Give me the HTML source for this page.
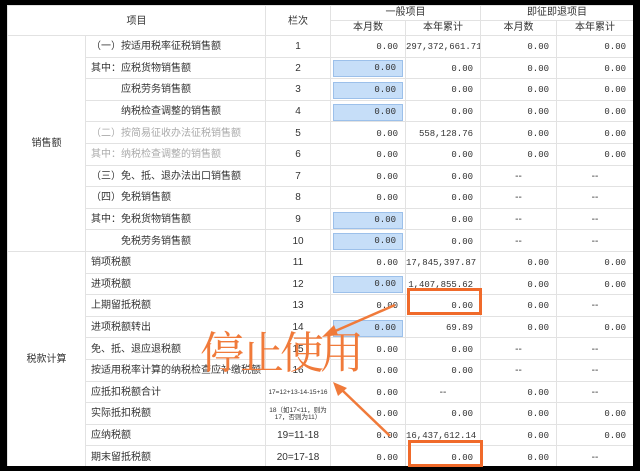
<!DOCTYPE html>
<html><head><meta charset="utf-8"><style>
body{margin:0;width:640px;height:471px;background:#000;overflow:hidden;position:relative;font-family:"Liberation Sans","Noto Sans CJK SC",sans-serif;}
#w{position:absolute;left:7px;top:5px;width:626px;height:461px;background:#fff;overflow:hidden;}
table{border-collapse:collapse;table-layout:fixed;width:626px;font-size:10px;color:#333;}
td{border:1px solid #e2e2e2;padding:2px 0 0 0;height:18.6px;line-height:14px;white-space:nowrap;overflow:hidden;vertical-align:middle;}
.c{text-align:center}
.r{text-align:right;padding-right:7px;font-family:"Liberation Mono","Noto Sans CJK SC",monospace;font-size:9px;}
.g{color:#aaa}
.in{display:block;margin:0 2px 0 2px;background:#c6def8;border:1px solid #9cc0ea;height:15px;line-height:15px;text-align:right;padding-right:6px;}
.in2{padding-right:0}
.h{height:14px;padding:0}
.sm{font-size:6.5px;line-height:7px;white-space:normal}
.l{padding-left:5px}
</style></head><body>
<div id="w">
<table>
<colgroup><col style="width:78px"><col style="width:180px"><col style="width:65px"><col style="width:75px"><col style="width:75px"><col style="width:76px"><col style="width:77px"></colgroup>
<tr><td class="c" rowspan="2" colspan="2">项目</td><td class="c" rowspan="2">栏次</td><td class="c h" colspan="2">一般项目</td><td class="c h" colspan="2">即征即退项目</td></tr>
<tr><td class="c h">本月数</td><td class="c h">本年累计</td><td class="c h">本月数</td><td class="c h">本年累计</td></tr>
<tr><td class="c" rowspan="10">销售额</td><td class="l">（一）按适用税率征税销售额</td><td class="c">1</td><td class="r">0.00</td><td class="r">297,372,661.71</td><td class="r">0.00</td><td class="r">0.00</td></tr>
<tr><td class="l">其中：应税货物销售额</td><td class="c">2</td><td class="r in2"><span class="in">0.00</span></td><td class="r">0.00</td><td class="r">0.00</td><td class="r">0.00</td></tr>
<tr><td class="l">　　　应税劳务销售额</td><td class="c">3</td><td class="r in2"><span class="in">0.00</span></td><td class="r">0.00</td><td class="r">0.00</td><td class="r">0.00</td></tr>
<tr><td class="l">　　　纳税检查调整的销售额</td><td class="c">4</td><td class="r in2"><span class="in">0.00</span></td><td class="r">0.00</td><td class="r">0.00</td><td class="r">0.00</td></tr>
<tr><td class="l g">（二）按简易征收办法征税销售额</td><td class="c">5</td><td class="r">0.00</td><td class="r">558,128.76</td><td class="r">0.00</td><td class="r">0.00</td></tr>
<tr><td class="l g">其中：纳税检查调整的销售额</td><td class="c">6</td><td class="r">0.00</td><td class="r">0.00</td><td class="r">0.00</td><td class="r">0.00</td></tr>
<tr><td class="l">（三）免、抵、退办法出口销售额</td><td class="c">7</td><td class="r">0.00</td><td class="r">0.00</td><td class="c">--</td><td class="c">--</td></tr>
<tr><td class="l">（四）免税销售额</td><td class="c">8</td><td class="r">0.00</td><td class="r">0.00</td><td class="c">--</td><td class="c">--</td></tr>
<tr><td class="l">其中：免税货物销售额</td><td class="c">9</td><td class="r in2"><span class="in">0.00</span></td><td class="r">0.00</td><td class="c">--</td><td class="c">--</td></tr>
<tr><td class="l">　　　免税劳务销售额</td><td class="c">10</td><td class="r in2"><span class="in">0.00</span></td><td class="r">0.00</td><td class="c">--</td><td class="c">--</td></tr>
<tr><td class="c" rowspan="10">税款计算</td><td class="l">销项税额</td><td class="c">11</td><td class="r">0.00</td><td class="r">17,845,397.87</td><td class="r">0.00</td><td class="r">0.00</td></tr>
<tr><td class="l">进项税额</td><td class="c">12</td><td class="r in2"><span class="in">0.00</span></td><td class="r">1,407,855.62</td><td class="r">0.00</td><td class="r">0.00</td></tr>
<tr><td class="l">上期留抵税额</td><td class="c">13</td><td class="r">0.00</td><td class="r">0.00</td><td class="r">0.00</td><td class="c">--</td></tr>
<tr><td class="l">进项税额转出</td><td class="c">14</td><td class="r in2"><span class="in">0.00</span></td><td class="r">69.89</td><td class="r">0.00</td><td class="r">0.00</td></tr>
<tr><td class="l">免、抵、退应退税额</td><td class="c">15</td><td class="r">0.00</td><td class="r">0.00</td><td class="c">--</td><td class="c">--</td></tr>
<tr><td class="l">按适用税率计算的纳税检查应补缴税额</td><td class="c">16</td><td class="r">0.00</td><td class="r">0.00</td><td class="c">--</td><td class="c">--</td></tr>
<tr><td class="l">应抵扣税额合计</td><td class="c sm">17=12+13-14-15+16</td><td class="r">0.00</td><td class="c">--</td><td class="r">0.00</td><td class="c">--</td></tr>
<tr><td class="l">实际抵扣税额</td><td class="c sm">18（如17&lt;11，则为17，否则为11）</td><td class="r">0.00</td><td class="r">0.00</td><td class="r">0.00</td><td class="r">0.00</td></tr>
<tr><td class="l">应纳税额</td><td class="c">19=11-18</td><td class="r">0.00</td><td class="r">16,437,612.14</td><td class="r">0.00</td><td class="r">0.00</td></tr>
<tr><td class="l">期末留抵税额</td><td class="c">20=17-18</td><td class="r">0.00</td><td class="r">0.00</td><td class="r">0.00</td><td class="c">--</td></tr>
</table>
</div>
<div style="position:absolute;left:200px;top:326px;font-size:44px;line-height:56px;color:#f07a3a;font-family:'Liberation Serif','Noto Serif CJK SC',serif;letter-spacing:-4px;">停止使用</div>
<div style="position:absolute;left:407px;top:288px;width:69px;height:21px;border:3px solid #f06a2a;"></div>
<div style="position:absolute;left:408px;top:440px;width:69px;height:21px;border:3px solid #f06a2a;"></div>
<svg style="position:absolute;left:0;top:0" width="640" height="471">
<line x1="395" y1="305" x2="333" y2="332" stroke="#f07a3a" stroke-width="2.5"/>
<polygon points="322,337 334,325 338,335" fill="#f07a3a"/>
<line x1="390" y1="436" x2="342" y2="390" stroke="#f07a3a" stroke-width="2.5"/>
<polygon points="333,382 347,388 338,396" fill="#f07a3a"/>
</svg>
</body></html>
